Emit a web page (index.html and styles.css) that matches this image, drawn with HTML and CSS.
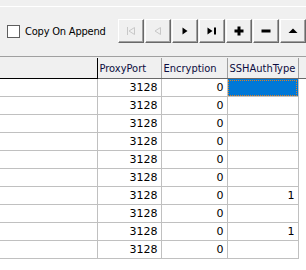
FILE: index.html
```html
<!doctype html>
<html lang="en">

<head>
  <title>Proxy grid</title>
  <link rel="stylesheet" href="styles.css">
</head>

<body>
  <div class="toolbar">
    <label class="copyOpt">
      <span class="checkBox"></span>
      <span>Copy On Append</span>
    </label>

    <div class="navButtons">
      <!-- first / prior are disabled -->
      <button class="navBtn" type="button">
        <svg width="12" height="12" viewBox="0 0 12 12"><path d="M2.5 2v8" stroke="#c8c8c8" fill="none"/><path d="M9.5 2.5L4 6l5.5 3.5z" stroke="#c8c8c8" fill="none"/></svg>
      </button>
      <button class="navBtn" type="button">
        <svg width="12" height="12" viewBox="0 0 12 12"><path d="M8.5 2.5L3 6l5.5 3.5z" stroke="#c8c8c8" fill="none"/></svg>
      </button>
      <button class="navBtn" type="button">
        <svg width="12" height="12" viewBox="0 0 12 12"><path d="M3.5 2.5l5 3.5-5 3.5z" fill="#000"/></svg>
      </button>
      <button class="navBtn" type="button">
        <svg width="12" height="12" viewBox="0 0 12 12"><path d="M1.5 2.5l5 3.5-5 3.5z" fill="#000"/><rect x="8" y="2.5" width="2" height="7" fill="#000"/></svg>
      </button>
      <button class="navBtn" type="button">
        <svg width="12" height="12" viewBox="0 0 12 12"><rect x="4.5" y="1.5" width="3" height="9" fill="#000"/><rect x="1.5" y="4.5" width="9" height="3" fill="#000"/></svg>
      </button>
      <button class="navBtn" type="button">
        <svg width="12" height="12" viewBox="0 0 12 12"><rect x="1.5" y="4.5" width="9" height="3" fill="#000"/></svg>
      </button>
      <button class="navBtn" type="button">
        <svg width="12" height="12" viewBox="0 0 12 12"><path d="M1.5 8L6 3.5 10.5 8z" fill="#000"/></svg>
      </button>
    </div>
  </div>

  <div class="gridBox">
    <table class="grid">
      <colgroup>
        <col class="c1"><col class="c2"><col class="c3"><col class="c4"><col>
      </colgroup>
      <thead>
        <tr>
          <th class="first"></th>
          <th>ProxyPort</th>
          <th>Encryption</th>
          <th>SSHAuthType</th>
          <th class="filler"></th>
        </tr>
      </thead>
      <tbody>
        <tr><td></td><td>3128</td><td>0</td><td class="selected"></td><td class="filler"></td></tr>
        <tr><td></td><td>3128</td><td>0</td><td></td><td class="filler"></td></tr>
        <tr><td></td><td>3128</td><td>0</td><td></td><td class="filler"></td></tr>
        <tr><td></td><td>3128</td><td>0</td><td></td><td class="filler"></td></tr>
        <tr><td></td><td>3128</td><td>0</td><td></td><td class="filler"></td></tr>
        <tr><td></td><td>3128</td><td>0</td><td></td><td class="filler"></td></tr>
        <tr><td></td><td>3128</td><td>0</td><td>1</td><td class="filler"></td></tr>
        <tr><td></td><td>3128</td><td>0</td><td></td><td class="filler"></td></tr>
        <tr><td></td><td>3128</td><td>0</td><td>1</td><td class="filler"></td></tr>
        <tr><td></td><td>3128</td><td>0</td><td></td><td class="filler"></td></tr>
      </tbody>
    </table>
  </div>
</body>

</html>
```

FILE: styles.css
```css
body {
  margin: 0;
  width: 306px;
  height: 270px;
  overflow: hidden;
  background-color: #fff;
  font-family: "DejaVu Sans", Verdana, sans-serif;
  font-size: 11px;
}

.toolbar {
  display: flex;
  align-items: center;
  height: 50px;
  padding-top: 6px;
  background-color: #f0f0f0;
  border-bottom: 1px solid #a0a0a0;
  box-shadow: inset 0 6px 0 #f0f0f0, inset 0 7px 0 #fff;
}

.copyOpt {
  display: flex;
  align-items: center;
  gap: 5px;
  margin-left: 7px;
  width: 114px;
  font-stretch: condensed;
  letter-spacing: -0.2px;
}

.checkBox {
  width: 11px;
  height: 11px;
  border: 1px solid #5e5e5e;
  background-color: #fff;
}

.navButtons {
  display: flex;
  gap: 1px;
}

.navBtn {
  width: 26px;
  height: 24px;
  padding: 0;
  display: flex;
  align-items: center;
  justify-content: center;
  background-color: #f0f0f0;
  border: 1px solid;
  border-color: #fff #696969 #696969 #fff;
  box-shadow: inset -1px -1px 0 #a0a0a0;
}

.gridBox {
  border-top: 1px solid #f0f0f0;
}

.grid {
  border-collapse: collapse;
  table-layout: fixed;
  width: 100%;
}

.c1 { width: 97px; }
.c2 { width: 64px; }
.c3 { width: 66px; }
.c4 { width: 71px; }

.grid th {
  height: 20px;
  padding: 0 0 0 2px;
  background-color: #f0f0f0;
  color: #0c0c40;
  font-weight: normal;
  text-align: left;
  font-stretch: condensed;
  border-right: 1px solid #a0a0a0;
  border-bottom: 1px solid #696969;
  white-space: nowrap;
  overflow: hidden;
}

.grid th.first {
  border-right: 1px solid #000;
  border-bottom: 1px solid #000;
}

.grid th.filler {
  border-right: none;
}

.grid td {
  height: 17px;
  padding: 0 3px 0 0;
  text-align: right;
  border-right: 1px solid #c0c0c0;
  border-bottom: 1px solid #c0c0c0;
  color: #000;
}

.grid td.filler {
  border: none;
  background-color: #fff;
}

.grid td.selected {
  background-color: #0078d7;
  outline: 1px dotted #e08020;
  outline-offset: -2px;
}
```
